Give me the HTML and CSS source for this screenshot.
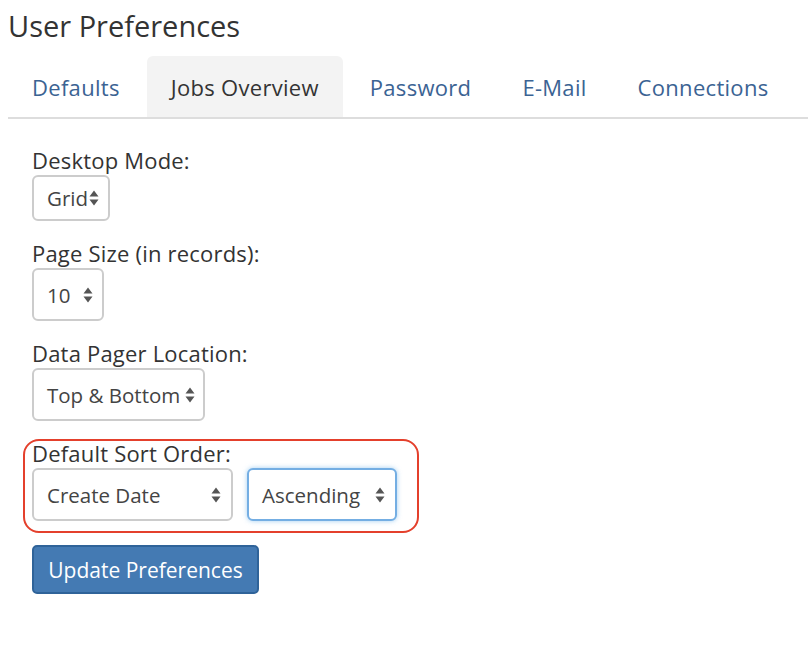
FILE: index.html
```html
<!DOCTYPE html>
<html>
<head>
<meta charset="utf-8">
<link rel="stylesheet" href="styles.css">
</head>
<body>
<div class="page">
  <h1 class="title">User Preferences</h1>
  <ul class="tabs">
    <li class="tab">Defaults</li>
    <li class="tab active">Jobs Overview</li>
    <li class="tab">Password</li>
    <li class="tab">E-Mail</li>
    <li class="tab">Connections</li>
  </ul>
  <form class="form">
    <div class="group">
      <label class="label">Desktop Mode:</label>
      <div class="select sel-grid"><span>Grid</span><svg class="arrow" width="10" height="16" viewBox="0 0 10 16"><path d="M0.5 6.5L5 0.5L9.5 6.5Z M0.5 9.5L5 15.5L9.5 9.5Z"/></svg></div>
    </div>
    <div class="group">
      <label class="label">Page Size (in records):</label>
      <div class="select sel-size"><span>10</span><svg class="arrow" width="10" height="16" viewBox="0 0 10 16"><path d="M0.5 6.5L5 0.5L9.5 6.5Z M0.5 9.5L5 15.5L9.5 9.5Z"/></svg></div>
    </div>
    <div class="group">
      <label class="label">Data Pager Location:</label>
      <div class="select sel-pager"><span>Top &amp; Bottom</span><svg class="arrow" width="10" height="16" viewBox="0 0 10 16"><path d="M0.5 6.5L5 0.5L9.5 6.5Z M0.5 9.5L5 15.5L9.5 9.5Z"/></svg></div>
    </div>
    <div class="group sort">
      <label class="label">Default Sort Order:</label>
      <div class="row">
        <div class="select sel-field"><span>Create Date</span><svg class="arrow" width="10" height="16" viewBox="0 0 10 16"><path d="M0.5 6.5L5 0.5L9.5 6.5Z M0.5 9.5L5 15.5L9.5 9.5Z"/></svg></div>
        <div class="select sel-dir focus"><span>Ascending</span><svg class="arrow" width="10" height="16" viewBox="0 0 10 16"><path d="M0.5 6.5L5 0.5L9.5 6.5Z M0.5 9.5L5 15.5L9.5 9.5Z"/></svg></div>
      </div>
    </div>
    <button type="button" class="btn">Update Preferences</button>
  </form>
</div>
</body>
</html>
```
FILE: styles.css
```css
html, body {
  margin: 0;
  padding: 0;
  background: #fff;
}
body {
  font-family: "Open Sans", "DejaVu Sans", sans-serif;
  color: #333;
}
.page {
  padding: 10px 0 0 8px;
}
.title {
  margin: 0 0 15px 0;
  font-size: 29px;
  line-height: 31px;
  font-weight: 400;
  color: #333;
}
.tabs {
  list-style: none;
  margin: 0;
  padding: 0;
  display: flex;
  gap: 3px;
  border-bottom: 2px solid #ddd;
}
.tab {
  padding: 16px 24px 14px;
  line-height: 31px;
  font-size: 22px;
  letter-spacing: 0.3px;
  color: #3b6393;
  border-radius: 6px 6px 0 0;
}
.tab.active {
  background: #f3f3f3;
  color: #333;
}
.form {
  padding: 26px 0 0 24px;
}
.group {
  margin-bottom: 17px;
}
.label {
  display: block;
  font-size: 22px;
  letter-spacing: 0.2px;
  line-height: 30px;
  color: #333;
}
.select {
  box-sizing: border-box;
  display: flex;
  align-items: center;
  justify-content: space-between;
  height: 53px;
  padding: 0 9px 0 13px;
  border: 2px solid #ccc;
  border-radius: 6px;
  font-size: 20.5px;
  color: #444;
  background: #fff;
}
.arrow {
  fill: #555;
  flex: none;
}
.sel-grid { width: 78px; height: 46px; }
.sel-size { width: 72px; }
.sel-pager { width: 173px; padding-right: 8px; }
.sel-field { width: 201px; padding-right: 10px; }
.sel-dir { width: 150px; padding-right: 10px; }
.focus {
  border-color: #74aee3;
  box-shadow: 0 0 5px rgba(102, 175, 233, 0.6);
}
.row {
  display: flex;
  gap: 14px;
}
.sort {
  position: relative;
  margin-bottom: 24px;
}
.sort::before {
  content: "";
  position: absolute;
  left: -9px;
  top: 1px;
  width: 396px;
  height: 94px;
  box-sizing: border-box;
  border: 2px solid #e4402c;
  border-radius: 16px;
  pointer-events: none;
}
.btn {
  display: block;
  box-sizing: border-box;
  width: 227px;
  height: 49px;
  margin-top: 1px;
  padding: 0;
  font-family: "Open Sans", "DejaVu Sans", sans-serif;
  font-size: 21px;
  color: #fff;
  background: #447ab3;
  border: 2px solid #2f6399;
  border-radius: 5px;
}
```
